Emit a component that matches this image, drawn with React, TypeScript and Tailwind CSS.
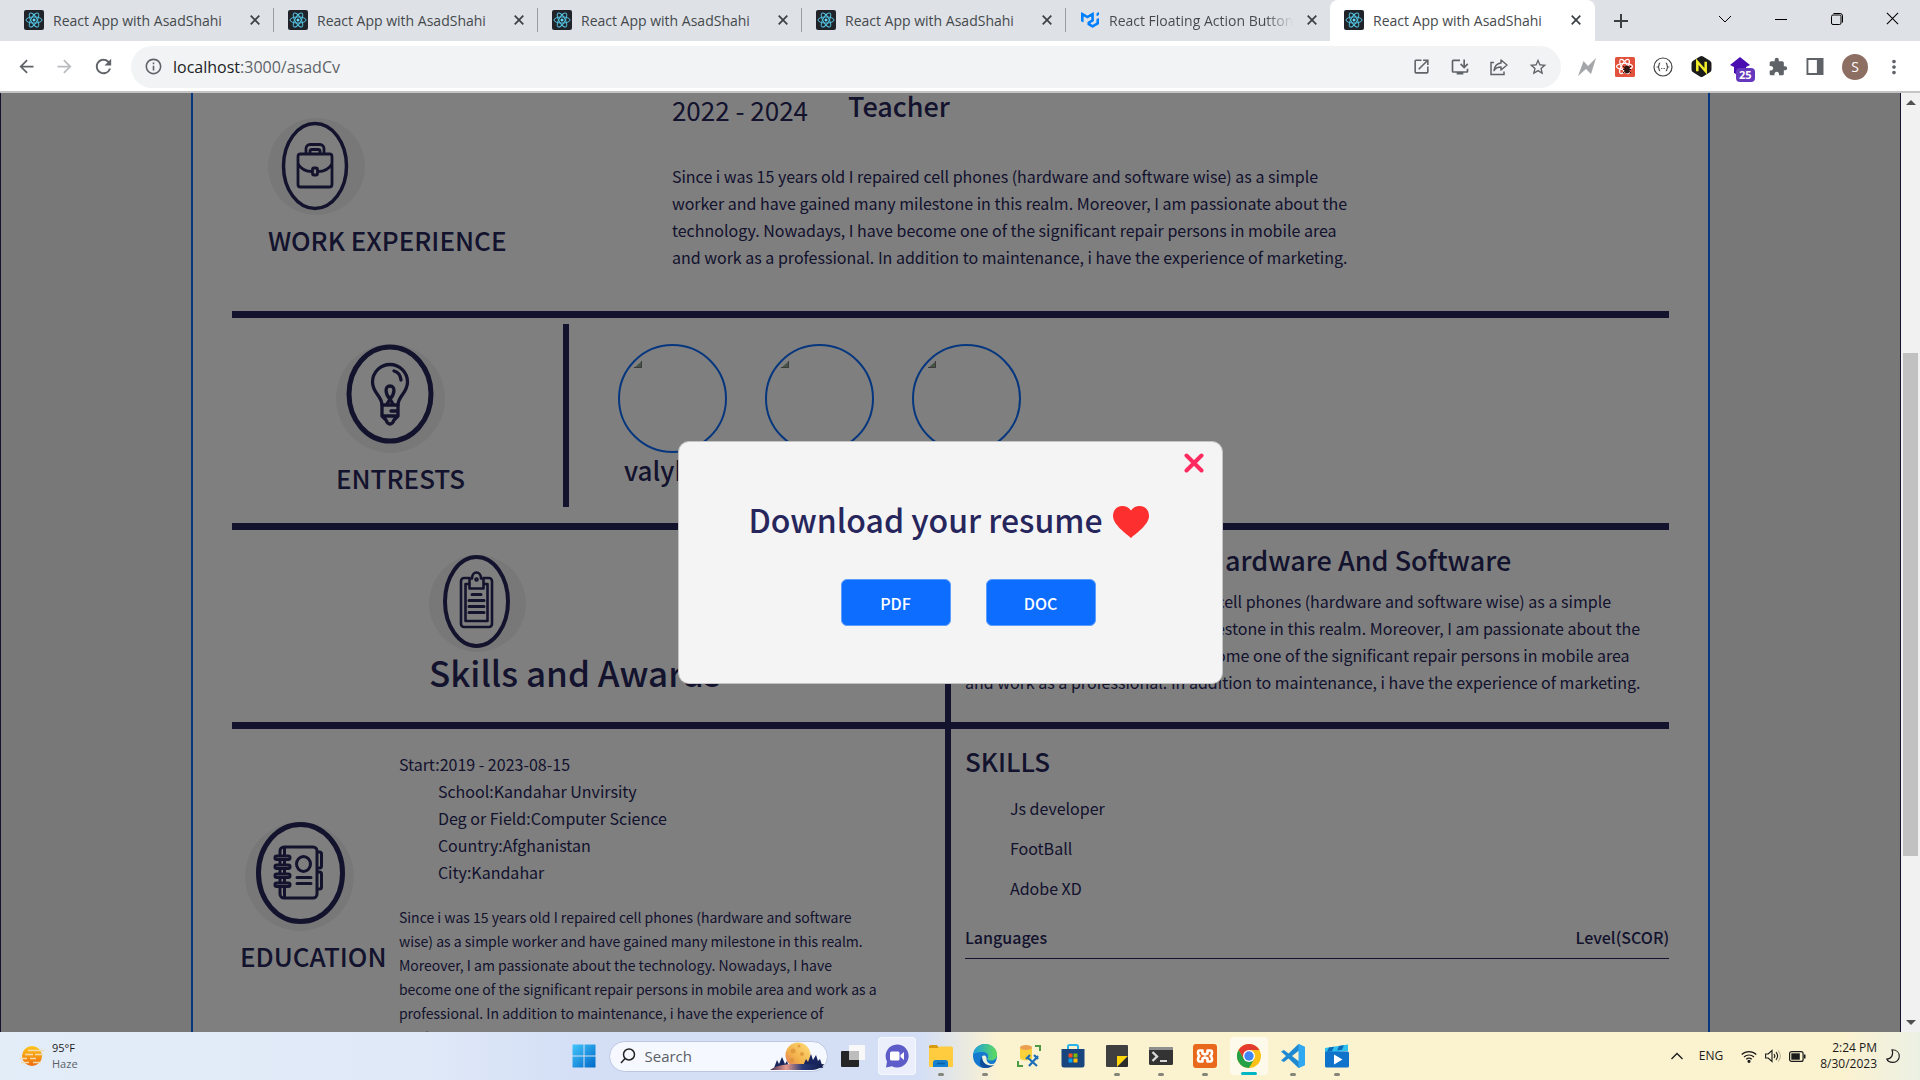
import type { ReactNode } from "react";
import {
  MdArrowBack,
  MdArrowForward,
  MdRefresh,
  MdInfoOutline,
  MdOpenInNew,
  MdInstallDesktop,
  MdStarBorder,
  MdExtension,
  MdMoreVert,
} from "react-icons/md";
import { SiMui } from "react-icons/si";

const BIO =
  "Since i was 15 years old I repaired cell phones (hardware and software wise) as a simple worker and have gained many milestone in this realm. Moreover, I am passionate about the technology. Nowadays, I have become one of the significant repair persons in mobile area and work as a professional. In addition to maintenance, i have the experience of marketing.";

/* ---------- Browser chrome ---------- */

function ReactFavicon() {
  return (
    <svg viewBox="0 0 20 20" className="h-5 w-5 shrink-0">
      <rect width="20" height="20" rx="2" fill="#20232a" />
      <g fill="none" stroke="#53c1de" strokeWidth="1">
        <ellipse cx="10" cy="10" rx="8" ry="3.1" />
        <ellipse cx="10" cy="10" rx="8" ry="3.1" transform="rotate(60 10 10)" />
        <ellipse cx="10" cy="10" rx="8" ry="3.1" transform="rotate(120 10 10)" />
      </g>
      <circle cx="10" cy="10" r="1.5" fill="#61dafb" />
    </svg>
  );
}

function Cross({ className }: { className: string }) {
  return (
    <svg viewBox="0 0 10 10" className={className} stroke="currentColor" fill="none">
      <path d="M.7.7l8.6 8.6M9.3.7L.7 9.3" />
    </svg>
  );
}

type TabInfo = { title: string; mui?: boolean; active?: boolean; divider?: boolean };

const tabs: TabInfo[] = [
  { title: "React App with AsadShahi", divider: true },
  { title: "React App with AsadShahi", divider: true },
  { title: "React App with AsadShahi", divider: true },
  { title: "React App with AsadShahi", divider: true },
  { title: "React Floating Action Button", mui: true },
  { title: "React App with AsadShahi", active: true },
];

function Tab({ tab }: { tab: TabInfo }) {
  return (
    <div
      className={
        tab.active
          ? "flex h-full w-[265px] items-center rounded-t-lg bg-white px-[14px] pb-px"
          : "flex h-full w-[264px] items-center pb-px pl-[14px]"
      }
    >
      {tab.mui ? <SiMui className="h-[18px] w-5 shrink-0 text-[#007fff]" /> : <ReactFavicon />}
      <span
        className={
          tab.mui
            ? "ml-[9px] w-[184px] overflow-hidden whitespace-nowrap bg-linear-to-r from-[#45494d] from-85% to-transparent bg-clip-text text-transparent"
            : "ml-[9px] w-[184px] overflow-hidden whitespace-nowrap"
        }
      >
        {tab.title}
      </span>
      <button aria-label="Close tab" className="ml-[14px] flex w-[10px] justify-center text-[#3c4043]">
        <Cross className="h-[10px] w-[10px] stroke-[1.7]" />
      </button>
      {tab.divider && <span className="ml-[13px] h-6 w-px bg-[#9a9da2]" />}
    </div>
  );
}

function TabStrip() {
  return (
    <div className="flex h-[41px] shrink-0 items-stretch bg-[#dee1e6] pl-[10px] font-['Open_Sans',sans-serif] text-[14px] text-[#45494d]">
      {tabs.map((t, i) => (
        <Tab key={i} tab={t} />
      ))}
      <button aria-label="New tab" className="ml-[19px] text-[#3c4043]">
        <svg viewBox="0 0 14 14" className="h-[14px] w-[14px]" stroke="currentColor" strokeWidth="2">
          <path d="M7 0v14M0 7h14" />
        </svg>
      </button>
      <div className="ml-auto flex items-center gap-[42px] pb-1 pr-[21px] text-black">
        <button aria-label="Search tabs">
          <svg viewBox="0 0 14 14" className="h-[14px] w-[14px]" fill="none" stroke="currentColor">
            <path d="M1 4l6 6 6-6" />
          </svg>
        </button>
        <button aria-label="Minimize">
          <svg viewBox="0 0 14 14" className="h-[14px] w-[14px]" fill="none" stroke="currentColor">
            <path d="M1 7.5h12" />
          </svg>
        </button>
        <button aria-label="Restore">
          <svg viewBox="0 0 14 14" className="h-[14px] w-[14px]" fill="none" stroke="currentColor">
            <rect x="1.5" y="3" width="9.5" height="9.5" rx="1.5" />
            <path d="M3.5 1.5H10a2.5 2.5 0 0 1 2.5 2.5v6.500" />
          </svg>
        </button>
        <button aria-label="Close window">
          <Cross className="h-[13px] w-[13px] stroke-[0.8]" />
        </button>
      </div>
    </div>
  );
}

function Toolbar() {
  return (
    <div className="flex h-[52px] shrink-0 items-center border-b-2 border-[#c4c4c4] bg-white pl-4 pr-[15px] pt-px text-[#5f6368]">
      <div className="flex items-center gap-[17px]">
        <button aria-label="Back">
          <MdArrowBack className="h-[21px] w-[21px]" />
        </button>
        <button aria-label="Forward" className="text-[#b9bbbe]">
          <MdArrowForward className="h-[21px] w-[21px]" />
        </button>
        <button aria-label="Reload">
          <MdRefresh className="h-[23px] w-[23px]" />
        </button>
      </div>
      <div className="ml-4 flex h-[42px] flex-1 items-center rounded-full bg-[#f1f3f4] px-[13px]">
        <MdInfoOutline className="h-[19px] w-[19px]" />
        <div className="relative ml-[10px] flex-1 font-['Open_Sans',sans-serif] text-[16px]">
          <input
            aria-label="Address"
            defaultValue="localhost:3000/asadCv"
            className="w-full bg-transparent text-transparent outline-none"
          />
          <span aria-hidden="true" className="pointer-events-none absolute inset-y-0 left-0">
            <span className="text-[#202124]">localhost</span>:3000/asadCv
          </span>
        </div>
        <div className="flex items-center gap-[19px]">
          <button aria-label="Open in new window">
            <MdOpenInNew className="h-[19px] w-[19px]" />
          </button>
          <button aria-label="Install app">
            <MdInstallDesktop className="h-5 w-5" />
          </button>
          <button aria-label="Share">
            <svg viewBox="0 0 20 20" className="h-5 w-5" fill="none" stroke="currentColor" strokeWidth="1.5">
              <path d="M5 5.500H2v12h13v-3" />
              <path d="M12 3l6 5-6 5v-3c-3.500 0-5.500 1-7 3.500C5.500 9.500 8 6.500 12 6z" strokeLinejoin="round" />
            </svg>
          </button>
          <button aria-label="Bookmark">
            <MdStarBorder className="h-5 w-5" />
          </button>
        </div>
      </div>
      <div className="ml-[16px] flex items-center gap-[18px]">
        <svg viewBox="0 0 20 20" className="h-5 w-5">
          <path d="M1 19L6.500 4 11 9 19 1 14 17 9 12z" fill="#a4a6a9" />
        </svg>
        <svg viewBox="0 0 20 20" className="h-5 w-5">
          <rect width="20" height="20" rx="1.500" fill="#e2513b" />
          <g fill="none" stroke="#fff" strokeWidth="1.100">
            <ellipse cx="9.500" cy="9.500" rx="8" ry="3" />
            <ellipse cx="9.500" cy="9.500" rx="8" ry="3" transform="rotate(60 9.5 9.5)" />
            <ellipse cx="9.500" cy="9.500" rx="8" ry="3" transform="rotate(120 9.5 9.5)" />
          </g>
          <ellipse cx="12" cy="12.500" rx="2.800" ry="4" fill="#2b1512" />
          <path d="M8 9l8 7M16 9l-8 7M8 12.500h8" stroke="#2b1512" />
        </svg>
        <svg viewBox="0 0 20 20" className="h-5 w-5" fill="none" stroke="#444" strokeWidth="1.200">
          <circle cx="10" cy="10" r="9" />
          <path d="M7.200 6c-2 0-.5 3.500-2.200 4 1.700.5.200 4 2.200 4M12.800 6c2 0 .5 3.500 2.200 4-1.700.5-.2 4-2.200 4M8 11.500h.800M9.600 11.500h.800M11.200 11.500h.800" />
        </svg>
        <svg viewBox="0 0 20 20" className="h-[21px] w-[21px]">
          <path d="M8.500.5q1.500-1 3 0l6.500 4q1.500 1 1.500 2.500v6q0 1.500-1.500 2.500l-6.500 4q-1.500 1-3 0l-6.500-4Q.5 14.500.5 13V7Q.5 5.500 2 4.500z" fill="#1b1b1b" />
          <path d="M6 14.500v-9l8 9v-9" fill="none" stroke="#f4ee2a" strokeWidth="2.400" />
        </svg>
        <div className="relative h-5 w-5">
          <svg viewBox="0 0 20 20" className="h-5 w-5">
            <path d="M10 0l10 8-4 2v6l-6 3-6-3v-6L0 8z" fill="#4a0fb0" />
          </svg>
          <span className="absolute left-[6px] top-[11px] rounded-sm bg-[#6638bd] px-[3px] font-['Open_Sans',sans-serif] text-[11px] font-bold leading-[14px] text-white">
            25
          </span>
        </div>
        <button aria-label="Extensions">
          <MdExtension className="h-5 w-5" />
        </button>
        <button aria-label="Side panel">
          <svg viewBox="0 0 18 18" className="h-[17px] w-[18px]">
            <path d="M0 0h18v18H0zM2 2v14h9V2z" fill="#5f6368" fillRule="evenodd" />
          </svg>
        </button>
        <button
          aria-label="Profile"
          className="h-[26px] w-[26px] rounded-full bg-[#8d6e63] font-['Open_Sans',sans-serif] text-[14px] text-white"
        >
          S
        </button>
        <button aria-label="Menu" className="-ml-[3px]">
          <MdMoreVert className="h-[22px] w-[22px]" />
        </button>
      </div>
    </div>
  );
}

/* ---------- Resume page ---------- */

const heading = "text-[26px] leading-[33px] font-medium";

function BriefcaseIcon() {
  return (
    <svg viewBox="0 0 97 97" className="h-[97px] w-[97px]" fill="none" stroke="#27265c">
      <circle cx="48.500" cy="48.500" r="48.500" fill="#f1f1f1" stroke="none" />
      <ellipse cx="47" cy="48" rx="31.500" ry="42.500" fill="#fff" strokeWidth="3.500" />
      <g strokeWidth="2.800">
        <rect x="30" y="36" width="34" height="33" rx="2.500" />
        <path d="M38 36v-5.500a4 4 0 0 1 4-4h10a4 4 0 0 1 4 4V36M42 36v-2.500a2 2 0 0 1 2-2h6a2 2 0 0 1 2 2V36" />
        <path d="M30 46c3 5 8 7.500 14 7.500M64 46c-3 5-8 7.500-14 7.500" />
        <rect x="44.500" y="50" width="5" height="7" rx="1.500" />
      </g>
    </svg>
  );
}

function BulbIcon() {
  return (
    <svg viewBox="0 0 109 109" className="h-[109px] w-[109px]" fill="none" stroke="#27265c">
      <circle cx="54.500" cy="54.500" r="54.500" fill="#f1f1f1" stroke="none" />
      <ellipse cx="54" cy="50" rx="41" ry="47" fill="#fff" strokeWidth="5" />
      <g strokeWidth="3.300" strokeLinecap="round" strokeLinejoin="round">
        <path d="M46 61c0-9-9.500-12-9.500-23a17 17 0 0 1 35 0c0 11-9.500 14-9.500 23z" />
        <path d="M46 61v11l4 4c1 3 2.500 4 4 4s3-1 4-4l4-4V61M46 72h16M55 67h7" />
        <path d="M51 60l3-5c-5-5-5.500-13 0-13s5 8 0 13l3 5" />
        <path d="M58 27c4 1 6.500 4.500 7 9" />
      </g>
    </svg>
  );
}

function ClipboardIcon() {
  return (
    <svg viewBox="0 0 97 97" className="h-[97px] w-[97px]" fill="none" stroke="#27265c">
      <circle cx="48.500" cy="48.500" r="48.500" fill="#f1f1f1" stroke="none" />
      <ellipse cx="47.500" cy="46.500" rx="31.500" ry="44.500" fill="#fff" strokeWidth="4" />
      <g strokeWidth="2.600" strokeLinejoin="round">
        <path d="M41 23h-6a3 3 0 0 0-3 3v43a3 3 0 0 0 3 3h25a3 3 0 0 0 3-3V26a3 3 0 0 0-3-3h-6" />
        <path d="M41 29h-4.500v37h22V29H54" />
        <path d="M40.500 33.500v-10h2.500c0-8 9-8 9 0h2.500v10z" fill="#fff" />
        <circle cx="47.500" cy="24.500" r="1" />
        <path d="M43 39.500h9M40 45.500h15M40 51.500h15M40 57.500h15" strokeWidth="3" strokeLinecap="round" />
      </g>
    </svg>
  );
}

function NotebookIcon() {
  return (
    <svg viewBox="0 0 109 109" className="h-[109px] w-[109px]" fill="none" stroke="#27265c">
      <circle cx="54.500" cy="54.500" r="54.500" fill="#f1f1f1" stroke="none" />
      <ellipse cx="55.500" cy="51" rx="42" ry="48.500" fill="#fff" strokeWidth="5" />
      <g strokeWidth="3" strokeLinejoin="round">
        <rect x="35" y="25" width="37" height="51" rx="4" />
        <path d="M39.500 25v51M72 30h2.500a2 2 0 0 1 2 2v12a2 2 0 0 1-2 2H72M72 50h2.500a2 2 0 0 1 2 2v13a2 2 0 0 1-2 2H72" />
        <g fill="#fff">
          <rect x="30" y="34" width="15" height="3.500" rx="1.700" />
          <rect x="30" y="43" width="15" height="3.500" rx="1.700" />
          <rect x="30" y="52" width="15" height="3.500" rx="1.700" />
          <rect x="30" y="61" width="15" height="3.500" rx="1.700" />
        </g>
        <ellipse cx="58.500" cy="42" rx="7" ry="7.500" />
        <path d="M52 55.500h14M52 61.500h14" strokeLinecap="round" />
      </g>
    </svg>
  );
}

function BrokenAvatar() {
  return (
    <div className="h-[109px] w-[109px] rounded-full border-2 border-[#0d6efd] pl-[14px] pt-[14px]">
      <svg viewBox="0 0 8 8" className="h-2 w-2">
        <path d="M8 1v7H0z" fill="#8aa58a" />
        <path d="M7.500 1v6.500H0" fill="none" stroke="#777" />
      </svg>
    </div>
  );
}

function Rule() {
  return <div className="h-[7px] bg-[#27265c]" />;
}

function Resume() {
  return (
    <div className="min-w-0 flex-1 border-x border-[#27265c] bg-[#f0f0f0]">
      <article className="mx-auto w-4/5 border-x-2 border-[#0d6efd] bg-white px-[39px] font-['Noto_Sans_CJK_SC',sans-serif] text-[16px] leading-[27px] text-[#27265c]">
        <section className="flex pb-10">
          <div className="w-[440px] shrink-0 pl-9 pt-[25px]">
            <BriefcaseIcon />
            <h2 className={`${heading} mt-2`}>WORK EXPERIENCE</h2>
          </div>
          <div className="w-[692px]">
            <div className="-mt-1 flex gap-10 text-[26px] leading-[33px]">
              <span className="pt-1">2022 - 2024</span>
              <h2 className="text-[27px] font-medium">Teacher</h2>
            </div>
            <p className="mt-[37px]">{BIO}</p>
          </div>
        </section>
        <Rule />
        <section className="flex">
          <div className="w-[331px] shrink-0 pb-[29px] pl-[104px] pt-[26px]">
            <BulbIcon />
            <h2 className={`${heading} mt-2`}>ENTRESTS</h2>
          </div>
          <div className="mb-4 mt-[6px] w-[6px] bg-[#27265c]" />
          <div className="flex gap-[38px] pl-[49px] pt-[26px]">
            <div>
              <BrokenAvatar />
              <h3 className={`${heading} text-center`}>valyball</h3>
            </div>
            <BrokenAvatar />
            <BrokenAvatar />
          </div>
        </section>
        <Rule />
        <section className="flex">
          <div className="w-[713px] shrink-0 pb-[30px] pl-[197px] pt-[25px]">
            <ClipboardIcon />
            <h1 className="text-[35px] font-medium leading-[40px]">Skills and Awards</h1>
          </div>
          <div className="w-[6px] shrink-0 bg-[#27265c]" />
          <div className="flex-1 pl-[14px] pt-[13px]">
            <h2 className="pl-[240px] text-[27px] font-medium leading-[33px]">Hardware And Software</h2>
            <p className="mt-3 max-w-[692px]">{BIO}</p>
          </div>
        </section>
        <Rule />
        <section className="flex">
          <div className="flex w-[713px] shrink-0">
            <div className="w-[167px] shrink-0 pl-2 pt-[93px]">
              <div className="pl-[5px]">
                <NotebookIcon />
              </div>
              <h2 className={`${heading} mt-2`}>EDUCATION</h2>
            </div>
            <div className="w-[484px] pt-[22px]">
              <dl>
                <div className="flex">
                  <dt>Start:</dt>
                  <dd>2019 - 2023-08-15</dd>
                </div>
                <div className="flex pl-[39px]">
                  <dt>School:</dt>
                  <dd>Kandahar Unvirsity</dd>
                </div>
                <div className="flex pl-[39px]">
                  <dt>Deg or Field:</dt>
                  <dd>Computer Science</dd>
                </div>
                <div className="flex pl-[39px]">
                  <dt>Country:</dt>
                  <dd>Afghanistan</dd>
                </div>
                <div className="flex pl-[39px]">
                  <dt>City:</dt>
                  <dd>Kandahar</dd>
                </div>
              </dl>
              <p className="mt-[19px] text-[14px] leading-6">{BIO}</p>
            </div>
          </div>
          <div className="w-[6px] shrink-0 bg-[#27265c]" />
          <div className="flex-1 pl-[14px] pt-[15px]">
            <h2 className={heading}>SKILLS</h2>
            <ul className="mt-[18px] flex flex-col gap-[13px] pl-[45px]">
              <li>Js developer</li>
              <li>FootBall</li>
              <li>Adobe XD</li>
            </ul>
            <table className="mt-[22px] w-full">
              <thead>
                <tr className="border-b border-[#27265c]">
                  <th className="pb-[7px] text-left font-medium">Languages</th>
                  <th className="pb-[7px] text-right font-medium">Level(SCOR)</th>
                </tr>
              </thead>
            </table>
          </div>
        </section>
      </article>
    </div>
  );
}

function DownloadDialog() {
  return (
    <div className="absolute inset-0 flex items-center justify-center bg-black/50 font-['Noto_Sans_CJK_SC',sans-serif]">
      <div
        role="dialog"
        aria-label="Download your resume"
        className="relative w-[545px] rounded-[11px] border border-[#c4c4c4] bg-[#f4f4f4] pb-[57px] pt-[53px]"
      >
        <button aria-label="Close" className="absolute right-[18px] top-[11px] text-[#ff2b60]">
          <svg viewBox="0 0 20 20" className="h-5 w-5" fill="none" stroke="currentColor">
            <path d="M2.500 2.500l15 15M17.500 2.500l-15 15" strokeWidth="4" strokeLinecap="round" />
          </svg>
        </button>
        <div className="flex items-center justify-center gap-[10px] pr-1">
          <h1 className="text-[32px] font-medium leading-[48px] text-[#27265c]">Download your resume</h1>
          <svg viewBox="0 0 36 32" className="mt-[6px] h-8 w-9" fill="#fd302f">
            <path d="M18 32C14 28 0 19 0 10 0 4 4 0 9.500 0 13 0 16 1.700 18 4.500 20 1.700 23 0 26.500 0 32 0 36 4 36 10c0 9-14 18-18 22z" />
          </svg>
        </div>
        <div className="mt-9 flex justify-center gap-[35px] pl-[35px] text-[16px] font-medium text-white">
          <button className="h-[47px] w-[110px] rounded-md border border-[#5c9dff] bg-[#0d6dff]">PDF</button>
          <button className="h-[47px] w-[110px] rounded-md border border-[#5c9dff] bg-[#0d6dff]">DOC</button>
        </div>
      </div>
    </div>
  );
}

function Scrollbar() {
  return (
    <div className="flex w-[19px] shrink-0 flex-col items-center justify-between bg-[#f1f1f1] py-[7px]">
      <svg viewBox="0 0 10 5" className="h-[5px] w-[10px]" fill="#505050">
        <path d="M0 5l5-5 5 5z" />
      </svg>
      <div className="flex w-full flex-1 flex-col items-center py-[5px]">
        <div className="flex-[243]" />
        <div className="w-[15px] flex-[503] bg-[#c1c1c1]" />
        <div className="flex-[159]" />
      </div>
      <svg viewBox="0 0 10 5" className="h-[5px] w-[10px]" fill="#505050">
        <path d="M0 0l5 5 5-5z" />
      </svg>
    </div>
  );
}

/* ---------- Taskbar ---------- */

function TaskItem({
  label,
  running,
  active,
  lit,
  children,
}: {
  label: string;
  running?: boolean;
  active?: boolean;
  lit?: boolean;
  children: ReactNode;
}) {
  return (
    <button
      aria-label={label}
      className={
        active
          ? "relative flex h-[38px] w-[38px] items-center justify-center rounded bg-white/60"
          : lit
            ? "relative flex h-[38px] w-[38px] items-center justify-center rounded border border-white/50 bg-white/50"
            : "relative flex h-[38px] w-[38px] items-center justify-center"
      }
    >
      <svg viewBox="0 0 24 24" className="h-6 w-6">
        {children}
      </svg>
      {running && <span className="absolute -bottom-px h-[3px] w-[6px] rounded-full bg-[#85857c]" />}
      {active && <span className="absolute bottom-0 h-[3px] w-4 rounded-full bg-[#00b7c3]" />}
    </button>
  );
}

function SearchArt() {
  return (
    <svg viewBox="0 0 54 29" className="h-[29px] w-[54px]">
      <defs>
        <linearGradient id="moon" x1="1" y1="0" x2="0" y2="1">
          <stop offset="0" stopColor="#ffe07a" />
          <stop offset=".6" stopColor="#f2b04a" />
          <stop offset="1" stopColor="#e0705a" />
        </linearGradient>
        <linearGradient id="hill">
          <stop offset="0" stopColor="#3b2a58" />
          <stop offset=".3" stopColor="#e79a8b" />
          <stop offset=".6" stopColor="#2a3a78" />
          <stop offset="1" stopColor="#101a48" />
        </linearGradient>
      </defs>
      <circle cx="28" cy="13" r="12.500" fill="url(#moon)" />
      <g fill="#d98f35" opacity=".7">
        <circle cx="23" cy="9" r="2.500" />
        <circle cx="32" cy="12" r="2" />
        <circle cx="29" cy="4" r="1.500" />
        <circle cx="22" cy="18" r="2" />
      </g>
      <path
        d="M4 26l3-8 2 4 3-7 3 7 2-3 2 6zM33 24l3-7 2 3 3-8 2 6 3-5 2 6 2-2 3 9z"
        fill="#18245c"
      />
      <path d="M0 28c8-6 20-6 30-6 10 0 18 1 24 0-2 4-8 6-14 6z" fill="url(#hill)" />
    </svg>
  );
}

function Taskbar() {
  return (
    <footer className="grid h-12 shrink-0 grid-cols-[1fr_auto_1fr] items-center font-['Open_Sans',sans-serif] text-[11px] text-[#1b1b1b] [background-image:linear-gradient(90deg,#e3edf8_0%,#e0e9f8_22%,#d4dff6_30%,#d4dff6_48%,#fbf2d0_52%,#fbf2d0_96%,#ecf0e4_100%)]">
      <div className="flex items-center gap-2 pl-5">
        <svg viewBox="0 0 24 22" className="h-[22px] w-6">
          <defs>
            <linearGradient id="sun" x1="0" y1="0" x2="0" y2="1">
              <stop offset="0" stopColor="#ffc61a" />
              <stop offset="1" stopColor="#ee6a0c" />
            </linearGradient>
          </defs>
          <circle cx="12" cy="11" r="10" fill="url(#sun)" />
          <path d="M8 5.500h16M5 9.500h8M15 9.500h8M10 13.500h6M0 13.500h7M1 17.500h8M13 17.500h8" stroke="#f0dcae" strokeWidth="1.500" />
        </svg>
        <div className="leading-4">
          <div>95°F</div>
          <div className="text-[#5b6068]">Haze</div>
        </div>
      </div>

      <div className="flex items-center gap-[6px]">
        <TaskItem label="Start">
          <defs>
            <linearGradient id="win" x1="0" y1="0" x2="1" y2="1">
              <stop offset="0" stopColor="#43c6fb" />
              <stop offset="1" stopColor="#0067c7" />
            </linearGradient>
          </defs>
          <path d="M.5.5h11v11H.5zM12.500.5h11v11h-11zM.5 12.500h11v11H.5zM12.500 12.500h11v11h-11z" fill="url(#win)" />
        </TaskItem>
        <label className="flex h-[31px] w-[219px] items-center rounded-full border border-[#bcc8e2] bg-[#f5f8fe] pl-[10px] pr-[3px]">
          <svg viewBox="0 0 16 16" className="h-4 w-4" fill="none" stroke="#222" strokeWidth="1.500">
            <circle cx="9" cy="6.500" r="5.500" />
            <path d="M5 10.500L1 15" />
          </svg>
          <input
            aria-label="Search"
            placeholder="Search"
            className="ml-[9px] w-0 flex-1 bg-transparent text-[15px] outline-none placeholder:text-[#5b5f66]"
          />
          <SearchArt />
        </label>
        <TaskItem label="Task view">
          <rect x="8" y="1" width="16" height="15" fill="#f8f8f8" />
          <rect y="7" width="18" height="16" rx="1" fill="#252525" />
          <rect x="8" y="7" width="10" height="9" fill="#bdbdbd" />
        </TaskItem>
        <TaskItem label="Chat" lit>
          <path d="M12 .5a11.500 11.500 0 1 1-5 21.800L1 23.500l1-6A11.500 11.500 0 0 1 12 .5z" fill="#5e5cc8" />
          <rect x="5" y="7.500" width="9.500" height="9" rx="1.500" fill="#fff" />
          <path d="M15.500 11l3.500-3v8l-3.500-3z" fill="#fff" />
        </TaskItem>
        <TaskItem label="File Explorer" running>
          <path d="M0 2.500a1.500 1.500 0 0 1 1.500-1.500H8l2 3H0z" fill="#d99a0b" />
          <path d="M0 4h9l1.500-1.500h12A1.500 1.500 0 0 1 24 4v18a1 1 0 0 1-1 1H1a1 1 0 0 1-1-1z" fill="#ffcc3f" />
          <path d="M4 23v-4.500a2.500 2.500 0 0 1 2.500-2.500h10a2.500 2.500 0 0 1 2.500 2.500V23z" fill="#1480cf" />
          <path d="M8 19.500h8" stroke="#0b5fa5" strokeWidth="1.500" />
        </TaskItem>
        <TaskItem label="Edge" running>
          <defs>
            <linearGradient id="edgeTop">
              <stop offset="0" stopColor="#1c9fe0" />
              <stop offset="1" stopColor="#5fdc5a" />
            </linearGradient>
          </defs>
          <circle cx="12" cy="12" r="12" fill="#1479cf" />
          <path d="M0 11C1 4 6 0 12 0c7 0 12 5 12 10.500 0 4-3 6-6 6-2.500 0-4-1-3.500-2C16 12 15 8 10 8 5 8 1 9 0 11z" fill="url(#edgeTop)" />
          <path d="M9 13c0 6 5 9 9 9 2 0 3.500-1 4.500-3-3 2-9 1.500-9-4.500 0-1-.5-3-2-3S9 12 9 13z" fill="#e9f1dc" />
          <path d="M9 13c0 6 5 8.500 9 8.500 1.500 0 3-.5 4-1.500-2 2.500-6 4-10 4C7 24 5 18 9 13z" fill="#0d4c9a" />
        </TaskItem>
        <TaskItem label="Database tools">
          <path d="M3 4v10c0 3 12 3 12 0V4z" fill="#fbd13b" />
          <ellipse cx="9" cy="3.500" rx="6" ry="2.500" fill="#eb9f52" />
          <path d="M18 2h5v5M1 17v5h5" fill="none" stroke="#4c9a43" strokeWidth="2" />
          <path d="M10 13l10 9M21 12l-9 10M9 15l4-4M17 11l4 4" stroke="#1d6fb8" strokeWidth="2.200" />
        </TaskItem>
        <TaskItem label="Microsoft Store">
          <path d="M7 5V2.500A1.500 1.500 0 0 1 8.500 1h7A1.500 1.500 0 0 1 17 2.500V5" fill="none" stroke="#27b4ec" strokeWidth="2" />
          <path d="M.5 5h23v16a2.500 2.500 0 0 1-2.500 2.500H3A2.500 2.500 0 0 1 .5 21z" fill="#18457e" />
          <path d="M7.500 9.500h4v4h-4z" fill="#f25022" />
          <path d="M12.500 9.500h4v4h-4z" fill="#7fba00" />
          <path d="M7.500 14.500h4v4h-4z" fill="#00a4ef" />
          <path d="M12.500 14.500h4v4h-4z" fill="#ffb900" />
        </TaskItem>
        <TaskItem label="Sticky Notes" running>
          <path d="M1 2a1 1 0 0 1 1-1h20a1 1 0 0 1 1 1v10L12 23H2a1 1 0 0 1-1-1z" fill="#3f3f3f" />
          <path d="M12 12h11L12 23z" fill="#ffd60a" />
          <path d="M23 12v10a1 1 0 0 1-1 1H12z" fill="#2c2c2c" />
        </TaskItem>
        <TaskItem label="Terminal" running>
          <rect y="3" width="24" height="18" rx="1.500" fill="#333" />
          <path d="M0 6V4.500A1.500 1.500 0 0 1 1.500 3h21A1.500 1.500 0 0 1 24 4.500V6z" fill="#8f8f8f" />
          <path d="M3.500 8l4.500 4.500L3.500 17" fill="none" stroke="#d8d8d8" strokeWidth="2.400" />
          <path d="M11 17h7" stroke="#fff" strokeWidth="1.600" />
        </TaskItem>
        <TaskItem label="XAMPP" running>
          <rect width="24" height="24" rx="3" fill="#e8691c" />
          <path
            d="M6.500 6.500h3v3l2.500 1 2.500-1v-3h3c2 0 2 4 0 5.500 2 1.500 2 5.500 0 5.500h-3v-3l-2.500-1-2.500 1v3h-3c-2 0-2-4 0-5.500-2-1.500-2-5.500 0-5.500z"
            fill="none"
            stroke="#fff"
            strokeWidth="2.600"
            strokeLinejoin="round"
          />
        </TaskItem>
        <TaskItem label="Chrome" active>
          <circle cx="12" cy="12" r="12" fill="#fbc116" />
          <path d="M1.600 6A12 12 0 0 1 22.400 6H12L6.800 15z" fill="#e33b2e" />
          <path d="M1.600 6A12 12 0 0 0 12 24l5.200-9H6.800z" fill="#24a147" />
          <circle cx="12" cy="12" r="6" fill="#fff" />
          <circle cx="12" cy="12" r="4.700" fill="#4285f4" />
        </TaskItem>
        <TaskItem label="VS Code" running>
          <path d="M17.500 0L24 3v18l-6.500 3-10-9.500L3 18l-3-1.500L5 12 0 7.500 3 6l4.500 3.500zM18 6.500L11 12l7 5.500z" fill="#1f8ad2" fillRule="evenodd" />
          <path d="M17.500 0L24 3v18l-6.500 3z" fill="#2fa8f2" />
        </TaskItem>
        <TaskItem label="Video editor" running>
          <path d="M0 4l23-3.500V7L0 9z" fill="#2fc0ee" />
          <path d="M4 3.500l5-.8-2 4.500-5 .5zM14 2l5-.8-2 4.500-5 .8z" fill="#0d6ab8" />
          <rect y="7.500" width="24" height="16" rx="1.500" fill="#0f73cc" />
          <path d="M9 10.500v10l8.500-5z" fill="#fff" />
        </TaskItem>
      </div>

      <div className="flex items-center justify-end pr-5">
        <button aria-label="Show hidden icons">
          <svg viewBox="0 0 12 8" className="h-2 w-3" fill="none" stroke="currentColor" strokeWidth="1.300">
            <path d="M.5 7L6 1.500 11.500 7" />
          </svg>
        </button>
        <span className="ml-4 text-[12px]">ENG</span>
        <svg viewBox="0 0 16 14" className="ml-[18px] h-[14px] w-4" fill="none" stroke="currentColor" strokeWidth="1.200">
          <path d="M.7 5.500a10.500 10.500 0 0 1 14.600 0M3 8a7.300 7.300 0 0 1 10 0M5.200 10.300a4.200 4.200 0 0 1 5.600 0" />
          <circle cx="8" cy="12.300" r="1" fill="currentColor" />
        </svg>
        <svg viewBox="0 0 16 14" className="ml-2 h-[14px] w-4" fill="none" stroke="currentColor" strokeWidth="1.100">
          <path d="M.6 5h2.600L7 1.500v11L3.200 9H.6zM9 5c1 1.200 1 2.800 0 4M11 3.200c2 2.400 2 5.200 0 7.600" />
          <path d="M13 1.500c3 3.500 3 7.500 0 11" opacity=".3" />
        </svg>
        <svg viewBox="0 0 17 11" className="ml-2 h-[11px] w-[17px]">
          <rect x=".6" y=".6" width="13.500" height="9.800" rx="2" fill="none" stroke="currentColor" strokeWidth="1.200" />
          <rect x="2.300" y="2.300" width="8.500" height="6.400" fill="currentColor" />
          <path d="M15 3.500h1.500v4H15z" fill="currentColor" />
        </svg>
        <div className="ml-[14px] text-right text-[12px] leading-4">
          <div>2:24 PM</div>
          <div>8/30/2023</div>
        </div>
        <svg viewBox="0 0 14 14" className="ml-[9px] h-[14px] w-[14px]" fill="none" stroke="currentColor" strokeWidth="1.100">
          <path d="M6 .8c5 0 7.300 3.200 7.300 6.500S10.500 13.400 7 13.400C4 13.400 1.500 12 .8 10 5 10 8 6 6 .8z" />
        </svg>
      </div>
    </footer>
  );
}

export default function App() {
  return (
    <div className="flex h-screen flex-col overflow-hidden">
      <TabStrip />
      <Toolbar />
      <main className="flex min-h-0 flex-1 overflow-hidden">
        <div className="relative flex min-w-0 flex-1 overflow-hidden">
          <Resume />
          <DownloadDialog />
        </div>
        <Scrollbar />
      </main>
      <Taskbar />
    </div>
  );
}
